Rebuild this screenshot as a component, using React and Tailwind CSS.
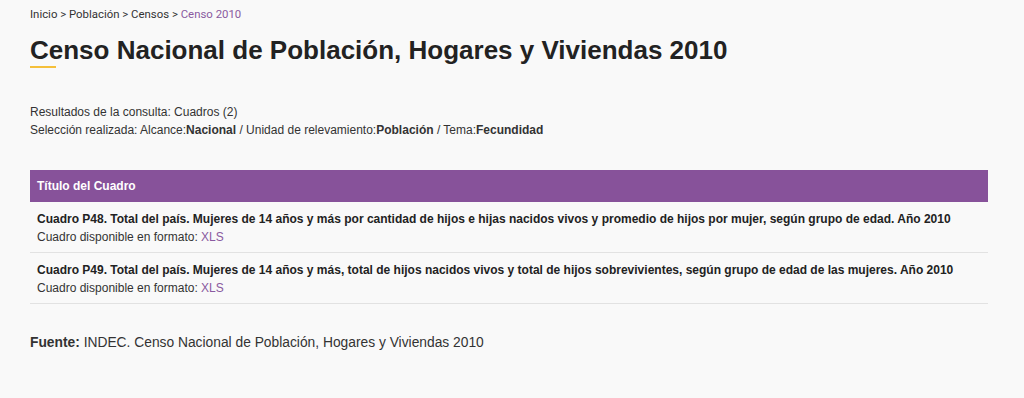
export default function App() {
  const rows = [
    'Cuadro P48. Total del país. Mujeres de 14 años y más por cantidad de hijos e hijas nacidos vivos y promedio de hijos por mujer, según grupo de edad. Año 2010',
    'Cuadro P49. Total del país. Mujeres de 14 años y más, total de hijos nacidos vivos y total de hijos sobrevivientes, según grupo de edad de las mujeres. Año 2010',
  ]

  return (
    <div className="min-h-[398px] bg-[#f9f9f9] pl-[30px] pr-[36px] text-[#333] font-['Liberation_Sans',Arial,sans-serif]">
      {/* Breadcrumb */}
      <div className="pt-[6px] text-[11.4px] leading-[16px] font-['Roboto',sans-serif] text-[#333]">
        Inicio &gt; Población &gt; Censos &gt; <span className="text-[#8a5aa0]">Censo 2010</span>
      </div>

      {/* Title */}
      <h1 className="mt-[13px] text-[26px] leading-[30px] font-bold text-[#222]">
        Censo Nacional de Población, Hogares y Viviendas 2010
      </h1>
      <div className="mt-[1px] h-[2px] w-[26px] bg-[#f5c03b]" />

      {/* Query info */}
      <div className="mt-[35px] text-[12px] leading-[18px]">
        <p>Resultados de la consulta: Cuadros (2)</p>
        <p>
          Selección realizada: Alcance:<b>Nacional</b> / Unidad de relevamiento:<b>Población</b> / Tema:<b>Fecundidad</b>
        </p>
      </div>

      {/* Table */}
      <div className="mt-[31px]">
        <div className="h-[32px] bg-[#87529a] px-[7px] flex items-center text-white text-[12px] font-bold">
          Título del Cuadro
        </div>
        {rows.map((r) => (
          <div key={r} className="px-[7px] pt-[8px] pb-[6px] border-b border-[#e2e2e2] text-[12px] leading-[18px]">
            <p className="font-bold text-[#222]">{r}</p>
            <p>
              Cuadro disponible en formato: <span className="text-[#8a5aa0]">XLS</span>
            </p>
          </div>
        ))}
      </div>

      {/* Source */}
      <p className="mt-[30px] text-[13.8px] leading-[18px]">
        <b>Fuente:</b> INDEC. Censo Nacional de Población, Hogares y Viviendas 2010
      </p>
    </div>
  )
}
